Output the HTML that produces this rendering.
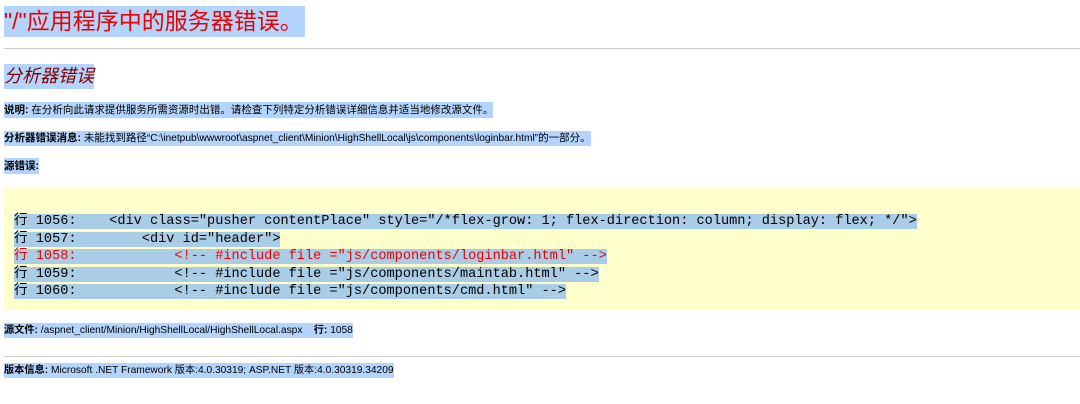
<!DOCTYPE html>
<html><head><meta charset="utf-8"><style>
body{margin:0;width:1080px;height:404px;background:#fff;font-family:"Liberation Sans","Noto Sans CJK SC",sans-serif;position:relative;overflow:hidden}
.a{position:absolute;left:4px;white-space:pre}
.s{background:#b3d4fc;padding:2px 0}
h1{position:absolute;left:4px;top:6px;margin:0;font-weight:normal;font-size:23px;line-height:31px;color:#e00;background:#b3d4fc;padding-right:2px}
h2{position:absolute;left:4px;top:64px;margin:0;font-weight:normal;font-style:italic;font-size:18px;line-height:25px;color:#800000;background:#b3d4fc}
hr{position:absolute;left:4px;right:0;margin:0;border:0;border-top:1px solid #ccc}
.p{font-size:10.2px;line-height:15px;color:#000}
.c{font-size:10.5px}
.p b{font-weight:bold}
.box{position:absolute;left:4px;right:0;top:187px;height:123px;background:#ffffcc}
.code{position:absolute;left:14px;top:213px;font-family:"Liberation Mono","Noto Sans CJK SC",monospace;font-size:13.6px;line-height:17.5px;white-space:pre}
.code div span{background:#a9cde6}
.r{color:#e00}
</style></head><body>
<h1>"/"应用程序中的服务器错误。</h1>
<hr style="top:48px">
<h2>分析器错误</h2>
<div class="a p c" style="top:103px"><span class="s"><b>说明:</b> 在分析向此请求提供服务所需资源时出错。请检查下列特定分析错误详细信息并适当地修改源文件。</span></div>
<div class="a p" style="top:131px"><span class="s"><b class="c">分析器错误消息:</b> <span class="c">未能找到路径</span>“C:\inetpub\wwwroot\aspnet_client\Minion\HighShellLocal\js\components\loginbar.html”<span class="c">的一部分。</span></span></div>
<div class="a p c" style="top:159px"><span class="s"><b>源错误:</b></span></div>
<div class="box"></div>
<div class="code"><div><span>行 1056:    &lt;div class="pusher contentPlace" style="/*flex-grow: 1; flex-direction: column; display: flex; */"&gt;</span></div><div><span>行 1057:        &lt;div id="header"&gt;</span></div><div class="r"><span>行 1058:            &lt;!-- #include file ="js/components/loginbar.html" --&gt;</span></div><div><span>行 1059:            &lt;!-- #include file ="js/components/maintab.html" --&gt;</span></div><div><span>行 1060:            &lt;!-- #include file ="js/components/cmd.html" --&gt;</span></div></div>
<div class="a p" style="top:323px"><span class="s"><b>源文件:</b> /aspnet_client/Minion/HighShellLocal/HighShellLocal.aspx    <b>行:</b> 1058</span></div>
<hr style="top:356px">
<div class="a p" style="top:363px"><span class="s"><b>版本信息:</b> Microsoft .NET Framework 版本:4.0.30319; ASP.NET 版本:4.0.30319.34209</span></div>
</body></html>
